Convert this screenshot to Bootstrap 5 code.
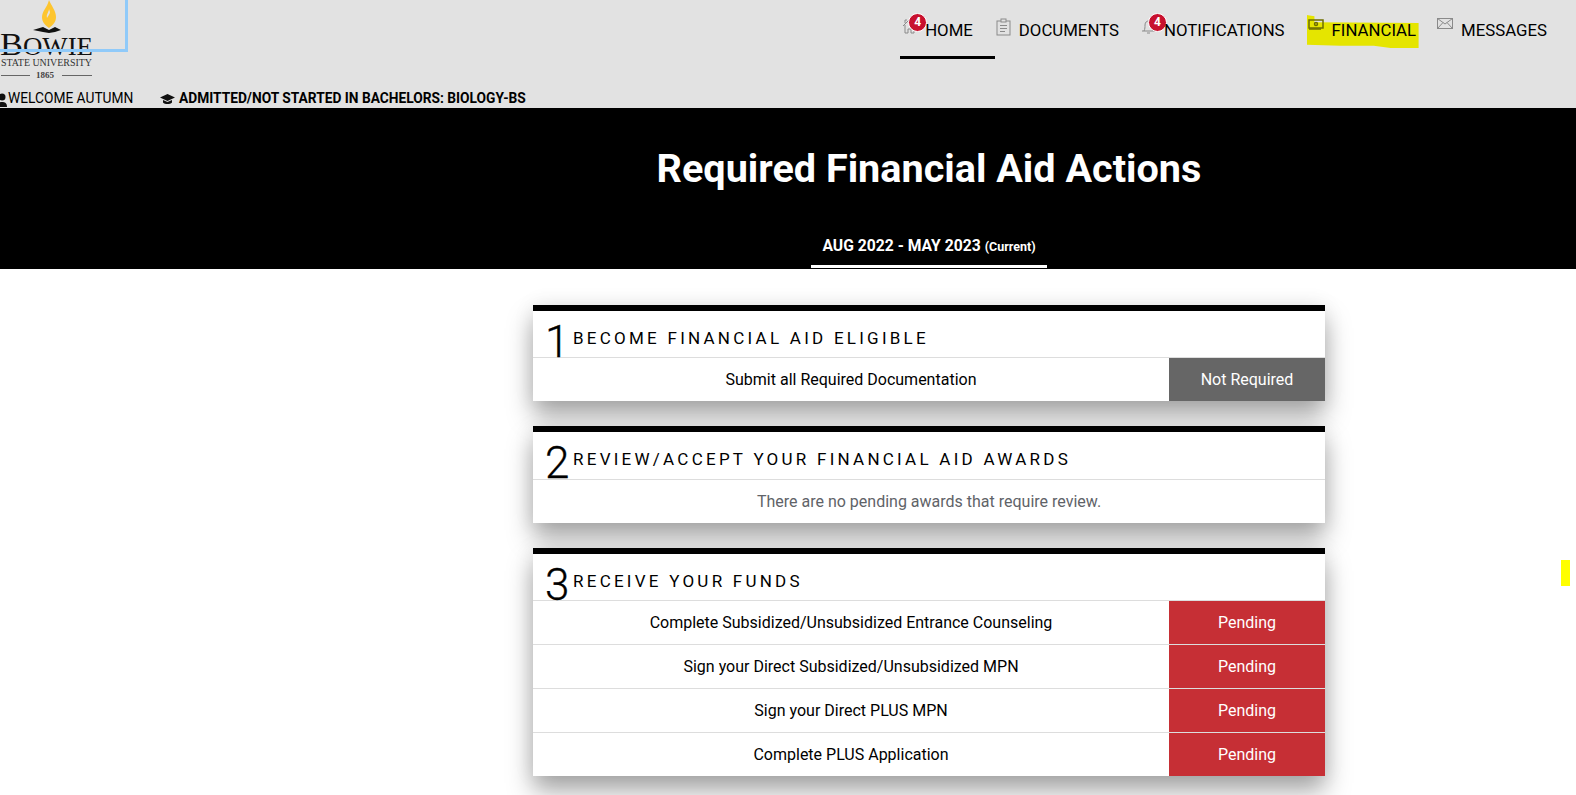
<!DOCTYPE html>
<html lang="en">
<head>
<meta charset="utf-8">
<title>Required Financial Aid Actions</title>
<link rel="stylesheet" href="https://cdn.jsdelivr.net/npm/bootstrap@5.3.0/dist/css/bootstrap.min.css">
<style>
html,body{height:795px;overflow:hidden}
body{font-family:Roboto,"Liberation Sans",sans-serif;color:#000;background:#fff;position:relative}
.top-shell{background:#e2e2e2;height:108px;position:relative;overflow:hidden}
.brand-wrap{width:96px;height:82px;flex:none}
.brand-wrap svg{display:block}
.blue-frame{position:absolute;left:0;top:-4px;width:128px;height:56px;border:3px solid #90caf9;border-left:0}
.nav-strip{padding-right:29px;height:60px}
.nav-cell{display:flex;align-items:flex-start;height:59px;padding:0 22px 0 2px;font-size:16.8px;line-height:20px;color:#000;text-decoration:none;position:relative;border-bottom:3px solid transparent}
.nav-cell span.lbl{margin-top:20px}
.nav-cell svg{flex:none;margin-top:18px;margin-right:8px}
.nav-cell.now{border-bottom-color:#000}
.nav-docs{padding:0 21px 0 1px}
.nav-notif{padding-left:1px}
.nav-fin{padding:0 20px 0 1px}
.nav-msg{padding:0 0 0 1px}
.bubble{position:absolute;left:8px;top:13px;width:19px;height:19px;border-radius:50%;background:#c8102e;color:#fff;font-size:12px;font-weight:700;line-height:16px;text-align:center;border:1.5px solid #fff}
.hilite{position:absolute;left:0;top:15px;width:112px;height:33px;background:#e5e500;clip-path:polygon(0 0,7% 4%,7% 22%,100% 24%,100% 100%,75% 100%,60% 93%,30% 93%,0 90%)}
.nav-cell .lbl,.nav-cell svg{position:relative}
.status-line{font-size:13.75px;line-height:18px;position:absolute;left:0;top:88.500px;white-space:nowrap}
.status-line .who{margin-left:8px;width:152px;display:inline-block}
.status-line b{font-weight:700;margin-left:4px}
.status-line svg{vertical-align:-2px}
.status-line .person-mark{position:absolute;left:-3px;top:4px}
.hero{background:#000;color:#fff;height:161px;padding-left:282px}
.hero-title{font-size:39.600px;line-height:48px;font-weight:700;margin:0;padding-top:37px}
.term-tab{margin-top:38px;width:236px;height:37px;border-bottom:3px solid #fff;font-size:15.700px;font-weight:700;line-height:20px;padding-top:5px}
.term-tab small{font-size:12.500px;font-weight:700}
.main-area{padding:36px 0 0 282px}
.step-box{width:792px;margin:0 auto 25px;border:0;border-top:6px solid #000;border-radius:0;background:#fff;box-shadow:0 15px 24px rgba(0,0,0,.34),0 0 20px rgba(0,0,0,.08)}
.step-head{height:47px;border-bottom:1px solid #ddd;padding-left:12px;position:relative}
.step-head.head-tall{height:48px}
.step-num{font-size:44px;font-weight:300;line-height:46px;width:28px;flex:none;margin-top:8px;height:38px;-webkit-text-stroke:.3px #000}
.step-name{font-size:17px;letter-spacing:3.250px;line-height:20px;margin-top:17px;white-space:nowrap}
.step-row{height:44px;font-size:16px;border-bottom:1px solid #ddd}
.step-row:last-child{border-bottom:0;height:43px}
.step-text{flex:1 1 auto;text-align:center;line-height:20px}
.step-flag{width:156px;flex:none;align-self:stretch;color:#fff;display:flex;align-items:center;justify-content:center;font-weight:400}
.flag-grey{background:#666}
.flag-red{background:#c62f35}
.muted-note{color:#5f6368;text-align:center;width:100%}
.yellow-tick{position:absolute;left:1561px;top:560px;width:9px;height:26px;background:#ff0}
</style>
</head>
<body>
<header class="top-shell">
  <div class="d-flex justify-content-between align-items-start">
    <div class="brand-wrap">
      <svg width="96" height="82" viewBox="0 0 96 82" role="img" aria-label="Bowie State University 1865">
        <path d="M49 0c2 5 7 11 7 17 0 5-3 8-7 11-4-3-7-6-7-11 0-6 5-9 7-17z" fill="#fdc52f"/>
        <path d="M49 9c0 3-3 5-2 9 1-2 3-4 3-6z" fill="#e2e2e2"/>
        <path d="M33 30l10-3 6 3 6-3 6 3-6 2-6 1-6-1z" fill="#111"/>
        <text x="0" y="55" font-family="Liberation Serif,serif" font-size="25" fill="#111" textLength="93" lengthAdjust="spacingAndGlyphs"><tspan font-size="32">B</tspan>OWIE</text>
        <text x="1" y="66" font-family="Liberation Serif,serif" font-size="9.500" textLength="91" lengthAdjust="spacingAndGlyphs" fill="#333">STATE UNIVERSITY</text>
        <path d="M1 75.500h29M62 75.500h30" stroke="#666" stroke-width="1"/>
        <text x="36" y="78" font-family="Liberation Serif,serif" font-size="9" font-weight="700" fill="#444">1865</text>
      </svg>
    </div>
    <nav class="nav-strip d-flex">
      <a class="nav-cell now" href="#">
        <svg width="15" height="16" viewBox="0 0 15 16" fill="none" stroke="#8a8a8a" stroke-width="1"><path d="M1 8l6-6 6 6M3 7v8h3v-4h3v4h3V7M3 5V2h2"/></svg>
        <span class="bubble">4</span><span class="lbl">HOME</span>
      </a>
      <a class="nav-cell nav-docs" href="#">
        <svg width="15" height="18" viewBox="0 0 15 18" fill="none" stroke="#8a8a8a" stroke-width="1"><rect x="1" y="3" width="13" height="14"/><rect x="5" y="1" width="5" height="3" fill="#e2e2e2"/><path d="M4 7.500h7M4 10.500h7M4 13.500h5"/></svg>
        <span class="lbl">DOCUMENTS</span>
      </a>
      <a class="nav-cell nav-notif" href="#">
        <svg width="15" height="16" viewBox="0 0 15 16" fill="none" stroke="#8a8a8a" stroke-width="1"><path d="M1 13h13M3 13c1-2 1-4 1-6 0-3 2-4 3.500-4S11 4 11 7c0 2 0 4 1 6M6 15h3"/></svg>
        <span class="bubble">4</span><span class="lbl">NOTIFICATIONS</span>
      </a>
      <a class="nav-cell nav-fin" href="#">
        <span class="hilite"></span>
        <svg width="16" height="13" viewBox="0 0 16 13" fill="none" stroke="#6e6e00" stroke-width="1.500"><path d="M1 2h14v8H1z"/><circle cx="8" cy="6" r="1.500"/><path d="M1 11h12"/></svg>
        <span class="lbl">FINANCIAL</span>
      </a>
      <a class="nav-cell nav-msg" href="#">
        <svg width="16" height="11" viewBox="0 0 16 11" fill="none" stroke="#8a8a8a" stroke-width="1"><rect x=".5" y=".5" width="15" height="10"/><path d="M.5.500L8 6l7.500-5.500M.5 10.500L6 4.500M15.500 10.500L10 4.500"/></svg>
        <span class="lbl">MESSAGES</span>
      </a>
    </nav>
  </div>
  <div class="status-line">
    <svg class="person-mark" width="10" height="14" viewBox="0 0 10 14" fill="#111"><circle cx="5" cy="4" r="3.500"/><path d="M0 14c0-4 2-5 5-5s5 1 5 5z"/></svg>
    <span class="who">WELCOME AUTUMN</span><svg width="15" height="11" viewBox="0 0 15 11" fill="#111"><path d="M7.500 0L15 3.500 7.500 7 0 3.500z"/><path d="M3 6v2.500C5 10.500 10 10.500 12 8.500V6L7.500 8z"/></svg><b>ADMITTED/NOT STARTED IN BACHELORS: BIOLOGY-BS</b>
  </div>
  <div class="blue-frame"></div>
</header>

<section class="hero text-center">
  <h1 class="hero-title">Required Financial Aid Actions</h1>
  <div class="term-tab mx-auto">AUG 2022 - MAY 2023 <small>(Current)</small></div>
</section>

<main class="main-area">
  <div class="card step-box">
    <div class="step-head d-flex"><div class="step-num">1</div><div class="step-name">BECOME FINANCIAL AID ELIGIBLE</div></div>
    <div class="step-row d-flex align-items-center"><div class="step-text">Submit all Required Documentation</div><div class="step-flag flag-grey">Not Required</div></div>
  </div>
  <div class="card step-box">
    <div class="step-head head-tall d-flex"><div class="step-num">2</div><div class="step-name">REVIEW/ACCEPT YOUR FINANCIAL AID AWARDS</div></div>
    <div class="step-row d-flex align-items-center"><div class="muted-note">There are no pending awards that require review.</div></div>
  </div>
  <div class="card step-box">
    <div class="step-head d-flex"><div class="step-num">3</div><div class="step-name">RECEIVE YOUR FUNDS</div></div>
    <div class="step-row d-flex align-items-center"><div class="step-text">Complete Subsidized/Unsubsidized Entrance Counseling</div><div class="step-flag flag-red">Pending</div></div>
    <div class="step-row d-flex align-items-center"><div class="step-text">Sign your Direct Subsidized/Unsubsidized MPN</div><div class="step-flag flag-red">Pending</div></div>
    <div class="step-row d-flex align-items-center"><div class="step-text">Sign your Direct PLUS MPN</div><div class="step-flag flag-red">Pending</div></div>
    <div class="step-row d-flex align-items-center"><div class="step-text">Complete PLUS Application</div><div class="step-flag flag-red">Pending</div></div>
  </div>
</main>
<div class="yellow-tick"></div>
<script src="https://cdn.jsdelivr.net/npm/bootstrap@5.3.0/dist/js/bootstrap.bundle.min.js"></script>
</body>
</html>
